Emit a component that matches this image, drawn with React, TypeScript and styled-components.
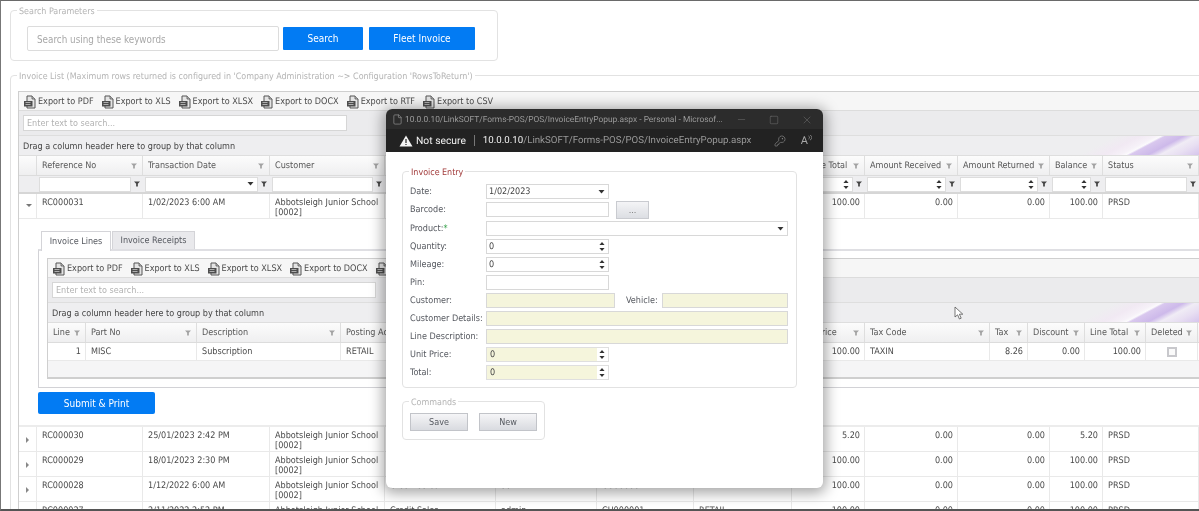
import React from 'react';
import styled, { createGlobalStyle } from 'styled-components';
import { File, KeyRound, Minus, Square, X } from 'lucide-react';

const GlobalStyle = createGlobalStyle`
  html, body {
    margin: 0;
    padding: 0;
    background: #fff;
    overflow: hidden;
  }
  * {
    box-sizing: border-box;
  }
`;

const FONT = `'DejaVu Sans Condensed', 'Liberation Sans', Arial, sans-serif`;
const EDGE_FONT = `Roboto, 'Open Sans', sans-serif`;

const Shell = styled.div`
  position: relative;
  width: 1199px;
  height: 511px;
  overflow: hidden;
  padding-left: 9px;
  background: #fff;
  border-top: 1px solid #6a6a6a;
  border-left: 1px solid #777;
  border-bottom: 2px solid #555;
  font-family: ${FONT};
  font-size: 9px;
  color: #4a4a4a;
  text-rendering: geometricPrecision;
  filter: blur(0.3px);
`;

const Group = styled.fieldset<{ $width: number; $top: number }>`
  display: block;
  width: ${p => p.$width}px;
  min-width: 0;
  margin: ${p => p.$top}px 0 0;
  padding: 0;
  border: 1px solid #e2e2e2;
  border-radius: 4px;
`;

const Legend = styled.legend<{ $color?: string }>`
  margin-left: 6px;
  padding: 4px 2px 0;
  font-size: 8.9px;
  line-height: 11px;
  color: ${p => p.$color || '#b4b4b4'};
`;

const GroupBody = styled.div<{ $pad: string }>`
  padding: ${p => p.$pad};
`;

const SearchRow = styled.div`
  display: flex;
  align-items: center;
`;

const KeywordInput = styled.input`
  width: 252px;
  height: 25px;
  padding: 1px 9px 0;
  border: 1px solid #dcdcdc;
  border-radius: 2px;
  font-family: ${FONT};
  font-size: 9.8px;
  outline: none;
  &::placeholder {
    color: #a8a8a8;
  }
`;

const PrimaryButton = styled.button<{ $width: number; $left: number }>`
  width: ${p => p.$width}px;
  height: 23px;
  margin-left: ${p => p.$left}px;
  padding: 0;
  border: 0;
  border-radius: 1px;
  background: #027bf3;
  color: #fff;
  font-family: ${FONT};
  font-size: 10px;
`;

const GridFrame = styled.div<{ $width: number }>`
  width: ${p => p.$width}px;
  border: 1px solid #cfcfcf;
  border-right: 0;
  background: #fff;
`;

const Toolbar = styled.div`
  display: flex;
  align-items: center;
  gap: 7px;
  height: 19px;
  padding: 1px 0 0 4px;
  background: #f6f6f6;
  border-bottom: 1px solid #dcdcdc;
`;

const ExportItem = styled.span`
  display: inline-flex;
  align-items: center;
  gap: 1px;
  white-space: nowrap;
`;

const SearchPanel = styled.div`
  display: flex;
  align-items: center;
  height: 25px;
  padding-left: 4px;
  background: #ebebed;
  border-bottom: 1px solid #dedede;
`;

const GridSearch = styled.input`
  width: 324px;
  height: 16px;
  padding: 0 3px;
  border: 1px solid #d6d6d6;
  font-family: ${FONT};
  font-size: 9px;
  outline: none;
  &::placeholder {
    color: #b2b2b2;
  }
`;

const GroupPanel = styled.div`
  height: 20px;
  padding-left: 4px;
  line-height: 22px;
  color: #444;
  background:
    linear-gradient(152deg, transparent 40%, #f1e9f3 52%, #f6f1f8 60%, #fbfafc 63%, #d9c8ee 65%, #cdb9ea 74%, #f0ecf5 80%, #e8dff2 88%, #d5c4ec 100%)
      right top / 165px 100% no-repeat,
    #eeeef0;
  border-bottom: 1px solid #dedede;
`;

const Row = styled.div<{ $cols: number[]; $height: number; $kind?: 'head' | 'filter' | 'data' }>`
  display: grid;
  grid-template-columns: ${p => p.$cols.map(c => `${c}px`).join(' ')};
  height: ${p => p.$height}px;
  background: ${p =>
    p.$kind === 'head' ? 'linear-gradient(#fcfcfc, #efeff0)' : p.$kind === 'filter' ? '#eeeef0' : '#fff'};
  border-bottom: ${p => (p.$kind === 'filter' ? '2px solid #d6d6d6' : p.$kind === 'head' ? '1px solid #dcdcdc' : '1px solid #e9e9e9')};
`;

const HeadCell = styled.div`
  display: flex;
  align-items: center;
  justify-content: space-between;
  min-width: 0;
  padding: 0 5px 0 5px;
  white-space: nowrap;
  overflow: hidden;
  color: #575757;
  border-right: 1px solid #dedede;
`;

const FilterCell = styled.div`
  display: flex;
  align-items: center;
  min-width: 0;
  gap: 3px;
  padding: 0 3px 0 2px;
`;

const FilterBox = styled.div`
  flex: 1;
  display: flex;
  align-items: center;
  justify-content: flex-end;
  height: 15px;
  padding-right: 3px;
  background: #fff;
  border: 1px solid #dddddd;
`;

const DataCell = styled.div<{ $right?: boolean; $center?: boolean }>`
  padding: ${p => (p.$center ? '0' : '4px 4px 0 5px')};
  line-height: 10px;
  text-align: ${p => (p.$right ? 'right' : 'left')};
  border-right: 1px solid #e9e9e9;
  overflow: hidden;
  display: ${p => (p.$center ? 'flex' : 'block')};
  align-items: center;
  justify-content: center;
`;

const ExpanderCell = styled.div`
  border-right: 1px solid #e9e9e9;
`;

const Expander = styled.span<{ $open?: boolean }>`
  display: block;
  margin: 10px 0 0 7px;
  width: 0;
  height: 0;
  ${p =>
    p.$open
      ? `border-left: 3px solid transparent; border-right: 3px solid transparent; border-top: 3px solid #777;`
      : `border-top: 3px solid transparent; border-bottom: 3px solid transparent; border-left: 3px solid #888;`}
`;

const DetailRow = styled.div`
  height: 208px;
  padding: 12px 0 0 19px;
  border-bottom: 2px solid #ececec;
`;

const TabStrip = styled.div`
  display: flex;
  gap: 1px;
  height: 18px;
  padding-left: 3px;
`;

const Tab = styled.div<{ $active?: boolean }>`
  display: flex;
  align-items: center;
  justify-content: center;
  width: ${p => (p.$active ? 70 : 83)}px;
  height: ${p => (p.$active ? 20 : 18)}px;
  position: relative;
  z-index: ${p => (p.$active ? 1 : 0)};
  background: ${p => (p.$active ? '#fff' : '#e9e9ec')};
  border: 1px solid #d4d4d8;
  border-bottom: 0;
  color: #55585f;
`;

const TabBody = styled.div`
  height: 139px;
  padding: 7px 0 0 8px;
  border: 1px solid #d2d2d6;
  border-top: 2px solid #dfdfe3;
  border-right: 0;
`;

const EmptyBand = styled.div`
  height: 17px;
  background: #f5f5f6;
  border-bottom: 1px solid #cfcfcf;
`;

const SubmitWrap = styled.div`
  margin-top: 4px;
`;

const SubmitButton = styled(PrimaryButton)`
  display: block;
  height: 22px;
  border-radius: 2px;
`;

const CheckBox = styled.span`
  display: block;
  width: 10px;
  height: 10px;
  background: #fafafa;
  border: 2px solid #c8c8cc;
`;

const Popup = styled.div`
  position: absolute;
  left: 385px;
  top: 108px;
  width: 437px;
  height: 379px;
  overflow: hidden;
  background: #fff;
  border-radius: 6px;
  box-shadow: 0 2px 14px 3px rgba(0, 0, 0, 0.36);
`;

const TitleBar = styled.div`
  display: flex;
  align-items: center;
  height: 20px;
  padding: 1px 10px 0 6px;
  background: #2c2c2c;
  color: #9a9a9a;
  font-family: ${EDGE_FONT};
  font-size: 8.4px;
  white-space: nowrap;
`;

const TitleText = styled.span`
  flex: 1;
  min-width: 0;
  margin-left: 2px;
`;

const WindowButtons = styled.div`
  display: flex;
  flex: none;
  align-items: center;
  gap: 22px;
`;

const AddressBar = styled.div`
  display: flex;
  align-items: center;
  height: 23px;
  padding: 0 11px 0 13px;
  background: #222;
  color: #9a9a9a;
  font-family: ${EDGE_FONT};
  font-size: 9.7px;
  white-space: nowrap;
`;

const NotSecure = styled.span`
  margin-left: 3px;
  font-size: 10.3px;
  color: #f2f2f2;
`;

const Divider = styled.span`
  flex: none;
  width: 1px;
  height: 11px;
  margin: 0 8px;
  background: #777;
`;

const UrlHost = styled.span`
  color: #f2f2f2;
`;

const UrlWrap = styled.span`
  flex: 1;
  min-width: 0;
`;

const AddressTools = styled.div`
  display: flex;
  flex: none;
  align-items: center;
  gap: 15px;
`;

const ReadAloud = styled.span`
  display: inline-flex;
  align-items: flex-start;
  font-size: 11px;
  line-height: 12px;
  color: #a8a8a8;
`;

const PopupBody = styled.div`
  padding: 12px 0 0 16px;
`;

const FormStack = styled.div`
  display: flex;
  flex-direction: column;
  gap: 3px;
`;

const FormRow = styled.div<{ $top?: number }>`
  display: flex;
  align-items: center;
  height: 15px;
  margin-top: ${p => p.$top || 0}px;
`;

const Label = styled.span`
  width: 76px;
  flex: none;
  color: #55585f;
  white-space: nowrap;
`;

const Star = styled.span`
  color: #2f9e44;
`;

const Field = styled.div<{ $width: number; $yellow?: boolean }>`
  display: flex;
  align-items: center;
  justify-content: space-between;
  flex: none;
  width: ${p => p.$width}px;
  height: 15px;
  padding: 0 3px 0 2px;
  background: ${p => (p.$yellow ? '#f5f5dc' : '#fff')};
  border: 1px solid #d8d8d8;
  color: #444;
`;

const ReadOnlySpin = styled.div`
  display: flex;
  align-items: center;
  justify-content: space-between;
  width: 123px;
  height: 15px;
  padding-left: 3px;
  padding-right: 3px;
  color: #444;
  background: linear-gradient(to right, #f5f5dc 110px, #fff 110px);
  border: 1px solid #dfdfdf;
`;

const DotsButton = styled.button`
  width: 33px;
  height: 18px;
  margin-left: 7px;
  padding: 0;
  color: #777;
  font-family: ${FONT};
  font-size: 9px;
  background: linear-gradient(#f4f4f6, #dcdee3);
  border: 1px solid #c9cbd0;
`;

const VehicleLabel = styled.span`
  width: 36px;
  flex: none;
  margin-left: 11px;
  color: #55585f;
`;

const CommandRow = styled.div`
  display: flex;
  gap: 11px;
`;

const CommandButton = styled.button`
  width: 58px;
  height: 18px;
  padding: 0;
  color: #55585f;
  font-family: ${FONT};
  font-size: 9px;
  background: linear-gradient(#f5f5f7, #d9dbe0);
  border: 1px solid #c2c4c9;
`;

const Pointer = styled.svg`
  position: absolute;
  left: 953px;
  top: 305px;
`;

const exportLabels = ['PDF', 'XLS', 'XLSX', 'DOCX', 'RTF', 'CSV'];

const DocIcon = () => (
  <svg width="14" height="14" viewBox="0 0 14 14">
    <path d="M4 1h5l3 3v9H4z" fill="#e4e4e4" stroke="#555" strokeWidth="1" />
    <path d="M9 1v3h3" fill="#bbb" stroke="#555" strokeWidth="0.8" />
    <rect x="1" y="6" width="8.5" height="5.5" fill="#4d4d4d" />
    <path d="M2.5 7.5h5M2.5 9.5h5" stroke="#c8c8c8" strokeWidth="0.8" />
  </svg>
);

const Funnel = ({ dark }: { dark?: boolean }) => (
  <svg width="6" height="6" viewBox="0 0 7 7" style={{ flex: 'none' }}>
    <path d="M0 .5h7L4.5 3.2V6.5h-2V3.2z" fill={dark ? '#444' : '#a2a2a2'} />
  </svg>
);

const Caret = () => (
  <svg width="7" height="4" viewBox="0 0 7 4">
    <path d="M.5 0h6L3.5 3.6z" fill="#333" />
  </svg>
);

const SpinArrows = () => (
  <svg width="6" height="9" viewBox="0 0 6 9">
    <path d="M3 0l2.6 3H.4zM.4 6h5.2L3 9z" fill="#333" />
  </svg>
);

const ExportBar = () => (
  <Toolbar>
    {exportLabels.map(label => (
      <ExportItem key={label}>
        <DocIcon />
        Export to {label}
      </ExportItem>
    ))}
  </Toolbar>
);

type Filter = 'text' | 'combo' | 'spin';

const mainCols = [18, 106, 127, 115, 111, 101, 97, 98, 73, 93, 92, 53, 96];
const mainHeads: { title: string; filter: Filter }[] = [
  { title: 'Reference No', filter: 'text' },
  { title: 'Transaction Date', filter: 'combo' },
  { title: 'Customer', filter: 'text' },
  { title: 'Sale Type', filter: 'text' },
  { title: 'User', filter: 'text' },
  { title: 'Code', filter: 'text' },
  { title: 'Account', filter: 'text' },
  { title: 'Invoice Total', filter: 'spin' },
  { title: 'Amount Received', filter: 'spin' },
  { title: 'Amount Returned', filter: 'spin' },
  { title: 'Balance', filter: 'spin' },
  { title: 'Status', filter: 'text' },
];

const invoices = [
  { ref: 'RC000030', date: '25/01/2023 2:42 PM', total: '5.20', balance: '5.20' },
  { ref: 'RC000029', date: '18/01/2023 2:30 PM', total: '100.00', balance: '100.00' },
  { ref: 'RC000028', date: '1/12/2022 6:00 AM', total: '100.00', balance: '100.00' },
  { ref: 'RC000027', date: '2/11/2022 2:52 PM', total: '100.00', balance: '100.00' },
];

const lineCols = [38, 111, 144, 452, 72, 125, 38, 57, 61, 52];
const lineHeads = [
  'Line',
  'Part No',
  'Description',
  'Posting Account',
  'Unit Price',
  'Tax Code',
  'Tax',
  'Discount',
  'Line Total',
  'Deleted',
];

const InvoiceRow = ({ refNo, date, total, balance, open }: { refNo: string; date: string; total: string; balance: string; open?: boolean }) => (
  <Row $cols={mainCols} $height={25} $kind="data">
    <ExpanderCell>
      <Expander $open={open} />
    </ExpanderCell>
    <DataCell>{refNo}</DataCell>
    <DataCell>{date}</DataCell>
    <DataCell>
      Abbotsleigh Junior School
      <br />
      [0002]
    </DataCell>
    <DataCell>Credit Sales</DataCell>
    <DataCell>admin</DataCell>
    <DataCell>CU000001</DataCell>
    <DataCell>RETAIL</DataCell>
    <DataCell $right>{total}</DataCell>
    <DataCell $right>0.00</DataCell>
    <DataCell $right>0.00</DataCell>
    <DataCell $right>{balance}</DataCell>
    <DataCell>PRSD</DataCell>
  </Row>
);

const NumberField = ({ value }: { value: string }) => (
  <Field $width={123}>
    {value}
    <SpinArrows />
  </Field>
);

export default function App() {
  return (
    <Shell>
      <GlobalStyle />

      <Group $width={488} $top={2}>
        <Legend>Search Parameters</Legend>
        <GroupBody $pad="8px 0 9px 16px">
          <SearchRow>
            <KeywordInput placeholder="Search using these keywords" />
            <PrimaryButton $width={80} $left={4}>Search</PrimaryButton>
            <PrimaryButton $width={106} $left={6}>Fleet Invoice</PrimaryButton>
          </SearchRow>
        </GroupBody>
      </Group>

      <Group $width={1300} $top={7}>
        <Legend>Invoice List (Maximum rows returned is configured in 'Company Administration ~&gt; Configuration 'RowsToReturn')</Legend>
        <GroupBody $pad="8px 0 0 7px">
          <GridFrame $width={1182}>
            <ExportBar />
            <SearchPanel>
              <GridSearch placeholder="Enter text to search..." />
            </SearchPanel>
            <GroupPanel>Drag a column header here to group by that column</GroupPanel>

            <Row $cols={mainCols} $height={20} $kind="head">
              <HeadCell />
              {mainHeads.map(h => (
                <HeadCell key={h.title}>
                  {h.title}
                  <Funnel />
                </HeadCell>
              ))}
            </Row>
            <Row $cols={mainCols} $height={18} $kind="filter">
              <FilterCell />
              {mainHeads.map(h => (
                <FilterCell key={h.title}>
                  <FilterBox>
                    {h.filter === 'combo' && <Caret />}
                    {h.filter === 'spin' && <SpinArrows />}
                  </FilterBox>
                  <Funnel dark />
                </FilterCell>
              ))}
            </Row>

            <InvoiceRow refNo="RC000031" date="1/02/2023 6:00 AM" total="100.00" balance="100.00" open />

            <DetailRow>
              <TabStrip>
                <Tab $active>Invoice Lines</Tab>
                <Tab>Invoice Receipts</Tab>
              </TabStrip>
              <TabBody>
                <GridFrame $width={1153}>
                  <ExportBar />
                  <SearchPanel>
                    <GridSearch placeholder="Enter text to search..." />
                  </SearchPanel>
                  <GroupPanel>Drag a column header here to group by that column</GroupPanel>
                  <Row $cols={lineCols} $height={20} $kind="head">
                    {lineHeads.map(title => (
                      <HeadCell key={title}>
                        {title}
                        <Funnel />
                      </HeadCell>
                    ))}
                  </Row>
                  <Row $cols={lineCols} $height={18} $kind="data">
                    <DataCell $right>1</DataCell>
                    <DataCell>MISC</DataCell>
                    <DataCell>Subscription</DataCell>
                    <DataCell>RETAIL</DataCell>
                    <DataCell $right>100.00</DataCell>
                    <DataCell>TAXIN</DataCell>
                    <DataCell $right>8.26</DataCell>
                    <DataCell $right>0.00</DataCell>
                    <DataCell $right>100.00</DataCell>
                    <DataCell $center>
                      <CheckBox />
                    </DataCell>
                  </Row>
                  <EmptyBand />
                </GridFrame>
              </TabBody>
              <SubmitWrap>
                <SubmitButton $width={117} $left={0}>Submit &amp; Print</SubmitButton>
              </SubmitWrap>
            </DetailRow>

            {invoices.map(inv => (
              <InvoiceRow key={inv.ref} refNo={inv.ref} date={inv.date} total={inv.total} balance={inv.balance} />
            ))}
          </GridFrame>
        </GroupBody>
      </Group>

      <Popup>
        <TitleBar>
          <File size={11} strokeWidth={1.4} color="#999" style={{ flex: 'none' }} />
          <TitleText>10.0.0.10/LinkSOFT/Forms-POS/POS/InvoiceEntryPopup.aspx - Personal - Microsof...</TitleText>
          <WindowButtons>
            <Minus size={11} strokeWidth={1} color="#777" />
            <Square size={10} strokeWidth={1.2} color="#777" />
            <X size={12} strokeWidth={1} color="#777" />
          </WindowButtons>
        </TitleBar>
        <AddressBar>
          <svg width="14" height="12" viewBox="0 0 14 12" style={{ flex: 'none' }}>
            <path d="M7 .5l6.5 11H.5z" fill="#f4f4f4" />
            <path d="M6.4 4h1.2v4H6.4zM6.4 8.9h1.2v1.2H6.4z" fill="#222" />
          </svg>
          <NotSecure>Not secure</NotSecure>
          <Divider />
          <UrlWrap>
            <UrlHost>10.0.0.10</UrlHost>/LinkSOFT/Forms-POS/POS/InvoiceEntryPopup.aspx
          </UrlWrap>
          <AddressTools>
            <KeyRound size={12} strokeWidth={1.2} color="#999" />
            <ReadAloud>
              A
              <svg width="4" height="6" viewBox="0 0 4 6">
                <path d="M.5 1c1.4.6 1.4 2.4 0 3M2 0c2.4 1 2.4 4 0 5" fill="none" stroke="#a8a8a8" strokeWidth=".7" />
              </svg>
            </ReadAloud>
          </AddressTools>
        </AddressBar>

        <PopupBody>
          <Group $width={395} $top={0}>
            <Legend $color="#a23c3c">Invoice Entry</Legend>
            <GroupBody $pad="5px 7px 7px">
              <FormStack>
                <FormRow>
                  <Label>Date:</Label>
                  <Field $width={123}>
                    1/02/2023
                    <Caret />
                  </Field>
                </FormRow>
                <FormRow>
                  <Label>Barcode:</Label>
                  <Field $width={123} />
                  <DotsButton>...</DotsButton>
                </FormRow>
                <FormRow $top={1}>
                  <Label>
                    Product:<Star>*</Star>
                  </Label>
                  <Field $width={302}>
                    <span />
                    <Caret />
                  </Field>
                </FormRow>
                <FormRow>
                  <Label>Quantity:</Label>
                  <NumberField value="0" />
                </FormRow>
                <FormRow>
                  <Label>Mileage:</Label>
                  <NumberField value="0" />
                </FormRow>
                <FormRow>
                  <Label>Pin:</Label>
                  <Field $width={123} />
                </FormRow>
                <FormRow>
                  <Label>Customer:</Label>
                  <Field $width={129} $yellow />
                  <VehicleLabel>Vehicle:</VehicleLabel>
                  <Field $width={126} $yellow />
                </FormRow>
                <FormRow>
                  <Label>Customer Details:</Label>
                  <Field $width={302} $yellow />
                </FormRow>
                <FormRow>
                  <Label>Line Description:</Label>
                  <Field $width={302} $yellow />
                </FormRow>
                <FormRow>
                  <Label>Unit Price:</Label>
                  <ReadOnlySpin>
                    0
                    <SpinArrows />
                  </ReadOnlySpin>
                </FormRow>
                <FormRow>
                  <Label>Total:</Label>
                  <ReadOnlySpin>
                    0
                    <SpinArrows />
                  </ReadOnlySpin>
                </FormRow>
              </FormStack>
            </GroupBody>
          </Group>

          <Group $width={143} $top={6}>
            <Legend>Commands</Legend>
            <GroupBody $pad="4px 7px 8px 7px">
              <CommandRow>
                <CommandButton>Save</CommandButton>
                <CommandButton>New</CommandButton>
              </CommandRow>
            </GroupBody>
          </Group>
        </PopupBody>
      </Popup>

      <Pointer width="11" height="14" viewBox="0 0 11 14">
        <path d="M1 1v10l2.6-2.2L5.4 13l1.8-.8-1.8-4h3.4z" fill="#fff" stroke="#555" strokeWidth="0.8" />
      </Pointer>
    </Shell>
  );
}
